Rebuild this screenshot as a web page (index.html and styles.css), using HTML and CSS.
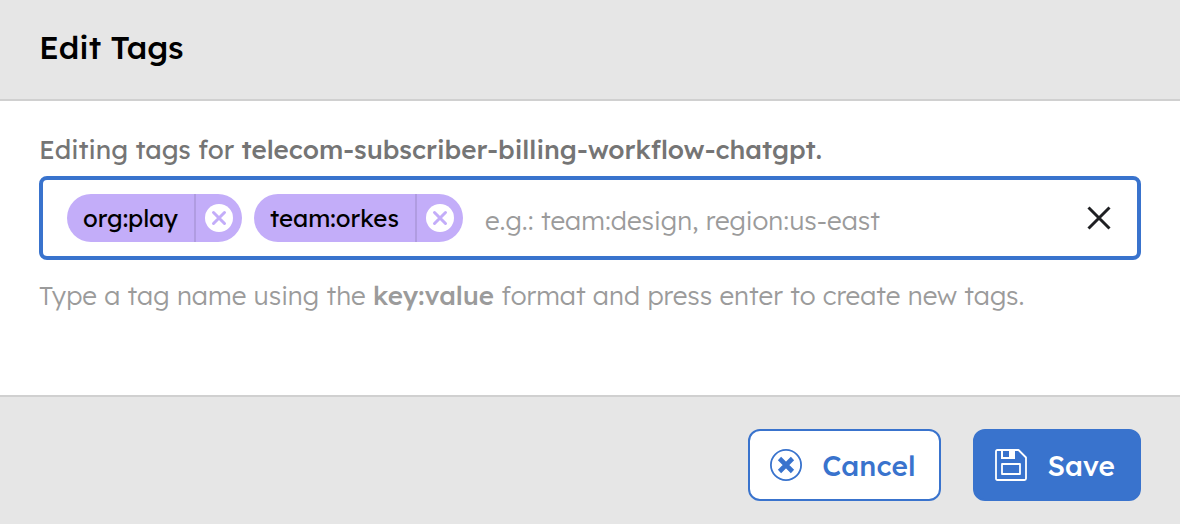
FILE: index.html
```html
<!DOCTYPE html>
<html lang="en">
<head>
  <meta charset="UTF-8">
  <meta name="viewport" content="width=device-width, initial-scale=1.0">
  <title>Edit Tags</title>
  <link rel="stylesheet" href="styles.css">
</head>
<body>

<form class="dialog">
  <header class="dialog-header">
    <h2>Edit Tags</h2>
  </header>

  <main class="dialog-body">
    <label class="tags-label" for="tagInput">Editing tags for <strong>telecom-subscriber-billing-workflow-chatgpt.</strong></label>

    <div class="tags-field">
      <span class="tag">
        <span class="tag-name">org:play</span>
        <button type="button" class="tag-remove" aria-label="Remove org:play">
          <svg viewBox="0 0 28 28" width="28" height="28"><circle cx="14" cy="14" r="14" fill="#fff"/><path d="M8.5 8.5l11 11M19.5 8.5l-11 11" stroke="#c3adf9" stroke-width="3" stroke-linecap="round"/></svg>
        </button>
      </span>
      <span class="tag">
        <span class="tag-name">team:orkes</span>
        <button type="button" class="tag-remove" aria-label="Remove team:orkes">
          <svg viewBox="0 0 28 28" width="28" height="28"><circle cx="14" cy="14" r="14" fill="#fff"/><path d="M8.5 8.5l11 11M19.5 8.5l-11 11" stroke="#c3adf9" stroke-width="3" stroke-linecap="round"/></svg>
        </button>
      </span>
      <input type="text" id="tagInput" class="tag-input" placeholder="e.g.: team:design, region:us-east">
      <button type="button" class="clear" aria-label="Clear">
        <svg viewBox="0 0 24 24" width="24" height="24"><path d="M1.5 1.5l21 21M22.5 1.5l-21 21" stroke="#1f2023" stroke-width="3"/></svg>
      </button>
    </div>

    <p class="hint">Type a tag name using the <strong>key:value</strong> format and press enter to create new tags.</p>
  </main>

  <footer class="dialog-footer">
    <button type="button" class="btn btn-outline">
      <svg viewBox="0 0 32 32" width="32" height="32" fill="none" stroke="currentColor"><circle cx="16" cy="16" r="15.1" stroke-width="1.8"/><path d="M9.5 9.5l13 13M22.5 9.5l-13 13" stroke-width="4.6"/></svg>
      Cancel
    </button>
    <button type="submit" class="btn btn-primary">
      <svg viewBox="0 0 32 32" width="32" height="32" fill="none" stroke="currentColor" stroke-width="1.8" stroke-linejoin="round"><path d="M2.5 1h21L31 8.500v21q0 1.500-1.500 1.500h-27Q1 31 1 29.500v-27Q1 1 2.500 1z"/><path d="M7 15h18v10H7z"/><path d="M6 1h14v9H6zM8 2v6h6V2z" fill="currentColor" fill-rule="evenodd" stroke="none"/></svg>
      Save
    </button>
  </footer>
</form>

</body>
</html>
```
FILE: styles.css
```css
body {
  margin: 0;
  font-family: Lexend, Inter, "Open Sans", sans-serif;
  font-size: 26px;
  background-color: #fff;
}
.dialog {
  display: flex;
  flex-direction: column;
  min-height: 100vh;
}
.dialog-header {
  padding: 27px 39px 32px;
  background-color: #e6e6e6;
  border-bottom: 2px solid #d0d0d0;
}
.dialog-header h2 {
  margin: 0;
  font-size: 32px;
  font-weight: 500;
  line-height: 40px;
  color: #000;
}
.dialog-body {
  flex: 1;
  padding: 31px 39px;
}
.tags-label {
  display: block;
  margin-bottom: 8px;
  line-height: 36px;
  color: #757575;
}
strong {
  font-weight: 500;
}
.tags-field {
  display: flex;
  align-items: center;
  gap: 12px;
  padding: 14px 24px;
  border: 4px solid #3973cd;
  border-radius: 8px;
}
.tag {
  display: flex;
  height: 48px;
  border-radius: 24px;
  background-color: #c3adf9;
  font-size: 24px;
  line-height: 48px;
  color: #000;
}
.tag-name {
  padding: 0 16px;
}
.tag-remove {
  display: flex;
  align-items: center;
  padding: 0 9px;
  border: 0;
  border-left: 2px solid #b09ce1;
  background: none;
}
.tag-input {
  flex: 1;
  min-width: 0;
  height: 48px;
  padding: 4px 10px 0;
  border: 0;
  outline: 0;
  box-sizing: border-box;
  background: none;
  font: inherit;
  font-weight: 300;
}
.tag-input::placeholder {
  color: #9b9b9b;
  opacity: 1;
}
.clear {
  display: flex;
  padding: 2px;
  border: 0;
  background: none;
}
.hint {
  margin: 18px 0 0;
  line-height: 36px;
  font-weight: 300;
  color: #9b9b9b;
}
.dialog-footer {
  display: flex;
  justify-content: flex-end;
  gap: 32px;
  padding: 32px 39px 23px;
  background-color: #e6e6e6;
  border-top: 2px solid #d0d0d0;
}
.btn {
  display: flex;
  align-items: center;
  gap: 20px;
  height: 72px;
  padding: 0 24px 0 20px;
  border: 2px solid #3973cd;
  border-radius: 12px;
  font: inherit;
  font-size: 28px;
  font-weight: 500;
}
.btn-outline {
  background-color: #fff;
  color: #3973cd;
}
.btn-primary {
  background-color: #3973cd;
  color: #fff;
}
```
